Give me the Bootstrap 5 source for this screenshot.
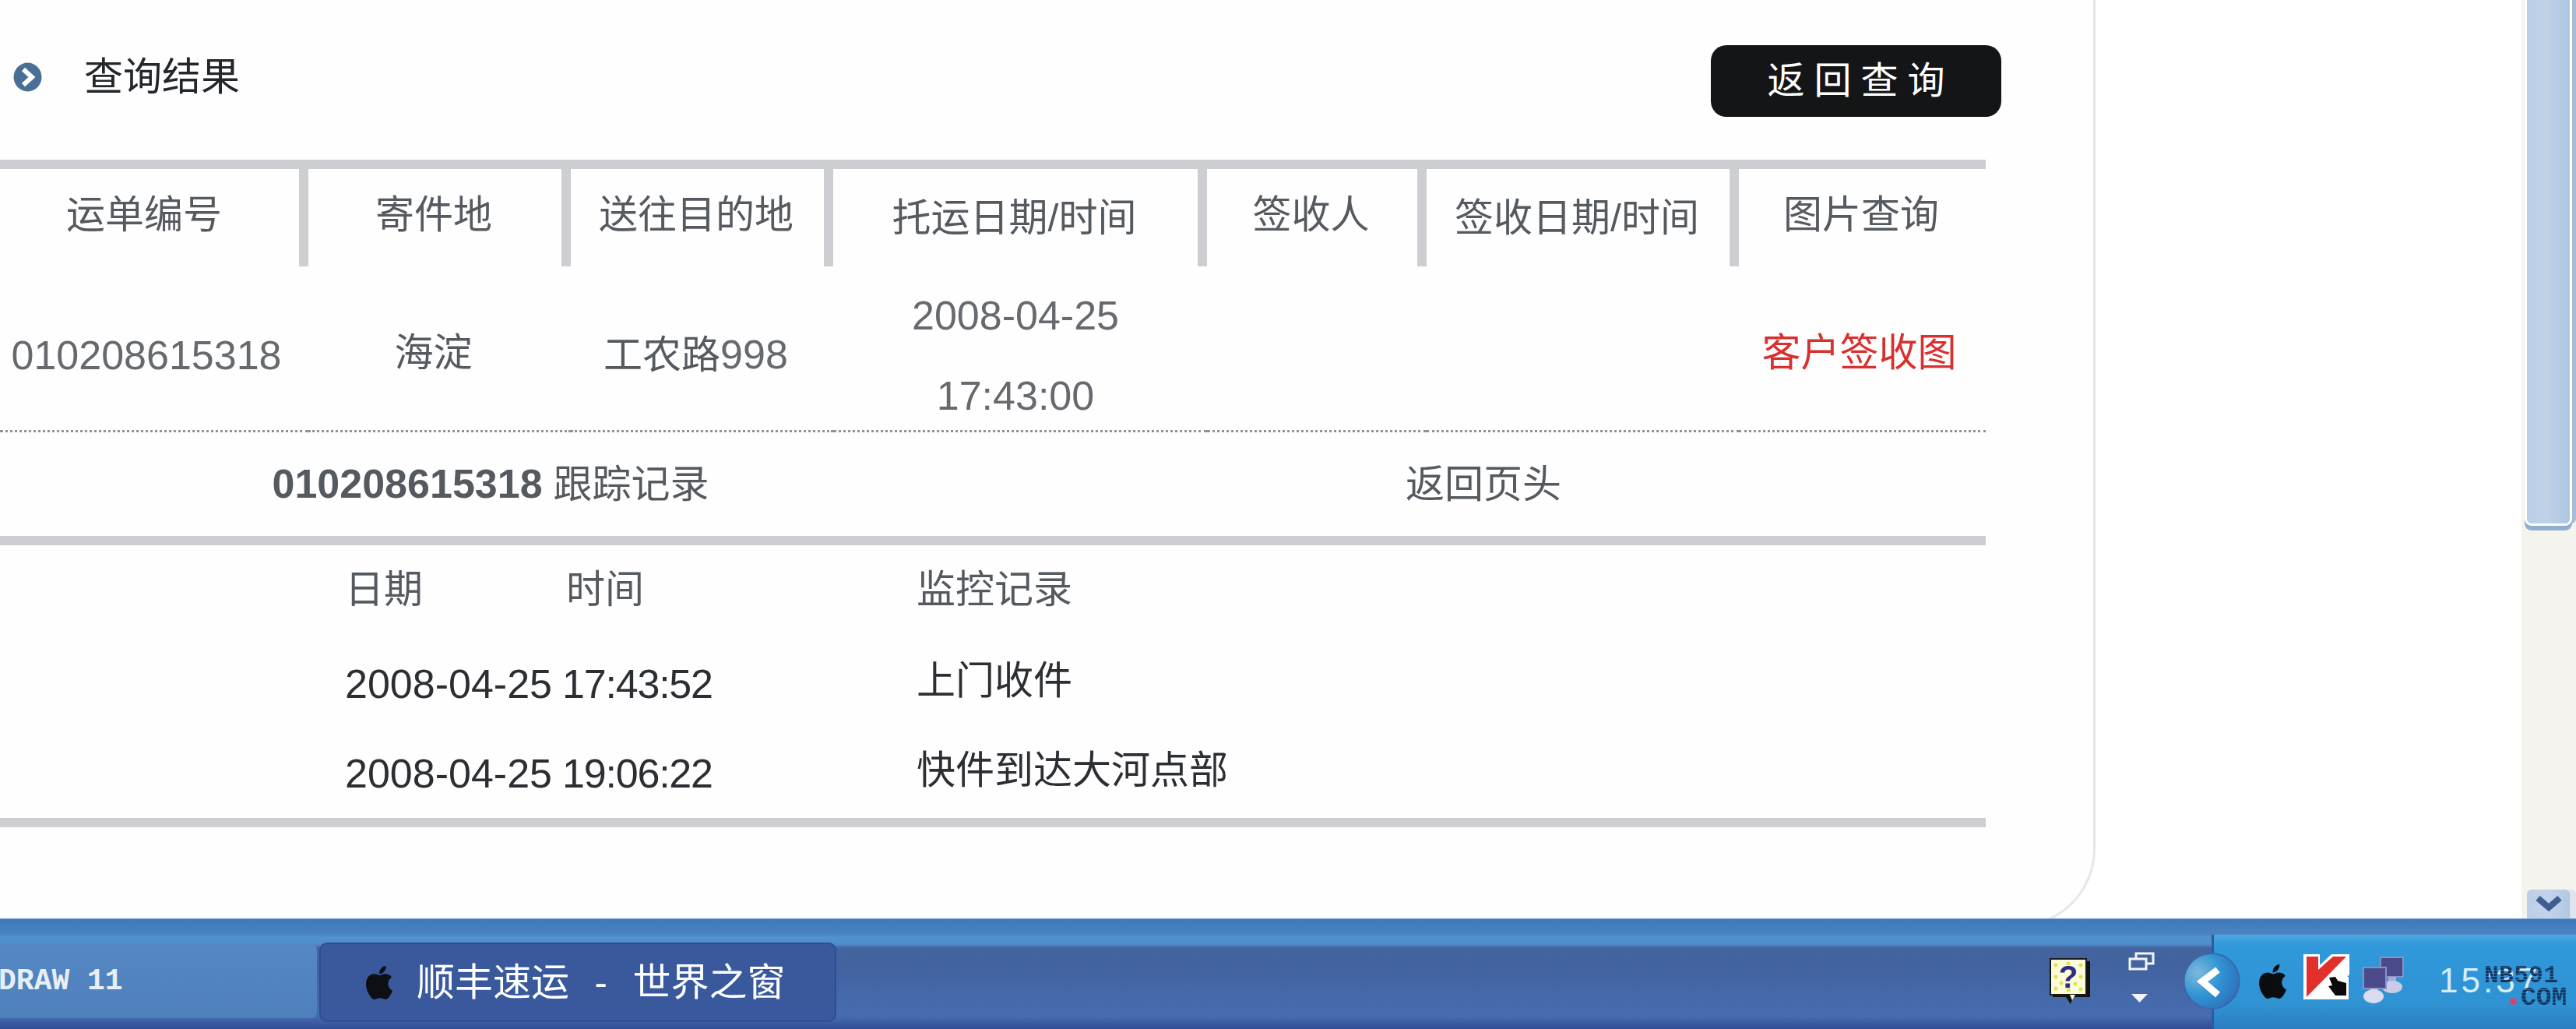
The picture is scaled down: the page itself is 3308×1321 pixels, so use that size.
<!DOCTYPE html>
<html lang="zh-CN">
<head>
  <meta charset="UTF-8" />
  <title>顺丰速运 - 世界之窗</title>
  <link rel="stylesheet" href="https://cdn.jsdelivr.net/npm/bootstrap@5.3.0/dist/css/bootstrap.min.css">
  <style>
    html, body { height: 1321px; overflow: hidden; }
    body {
      background: #fff;
      font-family: "Liberation Sans", "Noto Sans CJK SC", sans-serif;
      font-size: 50px;
      color: #555a60;
      line-height: 1.2;
    }
    .desk { height: 1179px; overflow: hidden; }

    /* page panel */
    .panel {
      width: 2691px;
      height: 1190px;
      padding-right: 138px;
      background: #fefefe;
      border-right: 3px solid #e4e8e8;
      border-bottom: 3px solid #e4e8e8;
      border-bottom-right-radius: 100px;
      flex: none;
    }
    .panel-head { height: 205px; padding: 58px 0 0 17px; margin-right: -20px; }
    .panel-title { margin-top: 5px; line-height: 72px; color: #23262a; }
    .bullet { width: 37px; height: 38px; margin-right: 54px; }
    .back-btn {
      width: 373px;
      height: 92px;
      padding: 0 0 0 12px;
      background: #141517;
      border: 0;
      border-radius: 20px;
      color: #fff;
      font-size: 48px;
      letter-spacing: 12px;
      line-height: 92px;
    }
    .back-btn:hover { background: #141517; color: #fff; }
    .rule { height: 12px; background: #cdced2; }

    .ship-grid { table-layout: fixed; border-collapse: separate; border-spacing: 0; width: 2550px; }
    .ship-grid th {
      height: 125px;
      padding: 0 3px 8px 0;
      border-right: 12px solid #cdced2;
      font-weight: 400;
      text-align: center;
      vertical-align: middle;
    }
    .ship-grid th:first-child { padding-right: 14px; }
    .ship-grid th:last-child { border-right: 0; }
    .ship-grid th.low { padding-bottom: 0; }
    .ship-grid td {
      height: 213px;
      padding: 18px 12px 0 0;
      border-bottom: 3px dotted #8f9397;
      text-align: center;
      vertical-align: middle;
    }
    .ship-grid td:first-child { padding-right: 20px; }
    .ship-grid td.nudge { padding-top: 12px; }
    .ship-grid td.shift-left { padding-right: 16px; }
    .ship-grid td.shift-right { padding-right: 8px; }
    .num { font-size: 52px; line-height: 52px; color: #666a6f; }
    .num + .num { margin-top: 51px; }
    .sign-link { color: #d8302e; text-decoration: none; }
    .track-row { height: 133px; }
    .track-left { width: 1260px; }
    .track-right { width: 1290px; }
    .track-no { font-size: 52px; font-weight: 700; }
    .top-link { color: #555a60; text-decoration: none; }

    .log-grid { table-layout: fixed; border-collapse: separate; border-spacing: 0; width: 2550px; }
    .log-grid td { padding: 0; height: 116px; vertical-align: middle; color: #2b2e32; white-space: nowrap; }
    .log-grid td.log-cn { padding-bottom: 8px; }
    .log-grid tr.log-head td { height: 120px; padding-bottom: 6px; color: #555a60; }
    .log-grid tr:last-child td { height: 114px; }
    .log-num { font-size: 52px; }
    .log-time { display: inline-block; margin-left: -5px; letter-spacing: -1.2px; }

    /* scrollbar */
    .vbar { width: 70px; flex: none; margin-left: auto; padding-left: 7px; background: #f5f3ee; }
    .vbar-thumb {
      width: 55px;
      height: 672px;
      background: linear-gradient(90deg, #bccfe6, #c0d0e7 50%, #adc6e2);
      border-bottom-left-radius: 6px;
      border-bottom-right-radius: 6px;
      box-shadow: 0 0 0 3px #fff, 0 6px 0 3px #8fafd0, 8px 0 0 0 #a7bcd6;
    }
    .vbar-down {
      width: 55px;
      height: 37px;
      background: linear-gradient(90deg, #bccfe6, #c3d2e9 50%, #b0c8e3);
      border-top-left-radius: 6px;
      border-top-right-radius: 6px;
      box-shadow: 8px 0 0 0 #dfe5ee;
    }
    .vbar-down svg { display: block; margin: 8px auto 0; }

    /* taskbar */
    .taskbar {
      height: 142px;
      background: linear-gradient(180deg, #a9c6de 0, #3f78bc 1px, #4a84c2 20px, #5192cf 24px, #4f8ecb 33px, #44649f 38px, #42629f 60px, #466db0 125px, #3f62a8 131px, #2f4b94 142px);
      position: relative;
    }
    .task-btn {
      flex: none;
      white-space: nowrap;
      overflow: hidden;
      color: #fff;
      display: flex;
      align-items: center;
    }
    .task-prev {
      width: 407px;
      height: 95px;
      margin-top: 33px;
      background: linear-gradient(180deg, #5487c3, #4f80bc);
      border-radius: 0 8px 8px 0;
      font-family: "Liberation Mono", monospace;
      font-size: 38px;
      font-weight: 700;
      color: #e8eef6;
    }
    .task-prev span { margin-left: -116px; }
    .task-now {
      width: 664px;
      height: 102px;
      margin: 31px 0 0 3px;
      padding-left: 56px;
      background: #39599c;
      border: 2px solid #2f4d90;
      border-radius: 10px;
      font-size: 49px;
      word-spacing: 19px;
    }
    .apple-task { width: 37px; height: 43px; margin-right: 30px; }
    .help-ico { width: 53px; height: 60px; margin: 51px 0 0 1558px; flex: none; }
    .restore-ico { width: 34px; height: 65px; margin: 43px 0 0 48px; flex: none; }
    .tray {
      width: 468px;
      height: 121px;
      margin: 21px 0 0 73px;
      flex: none;
      position: relative;
      background: linear-gradient(180deg, #4ea8e0 0, #2f99da 14px, #2f92d3 90px, #2a7ec2 121px);
      border-left: 3px solid #2f5a9f;
    }
    .tray-toggle { width: 74px; height: 75px; margin: 22px 0 0 -40px; flex: none; }
    .apple-tray { width: 38px; height: 44px; margin: 38px 0 0 22px; flex: none; }
    .kav-ico { width: 59px; height: 58px; margin: 25px 0 0 21px; flex: none; }
    .net-ico { width: 56px; height: 62px; margin: 27px 0 0 16px; flex: none; }
    .clock { margin: 34px 0 0 43px; font-size: 44px; line-height: 50px; letter-spacing: 4px; color: #d6ecf8; }
    .stamp {
      position: absolute;
      font-family: "Liberation Mono", monospace;
      font-weight: 700;
      white-space: nowrap;
      color: transparent;
      background: repeating-linear-gradient(180deg, #12345c 0 3px, #2a6fa8 3px 4px);
      -webkit-background-clip: text;
      background-clip: text;
    }
    .stamp-a { left: 347px; top: 38px; font-size: 31px; line-height: 30px; letter-spacing: .5px; }
    .stamp-b { left: 394px; top: 67px; font-size: 33px; line-height: 30px; }
    .stamp-dot { position: absolute; left: 380px; top: 81px; width: 9px; height: 9px; border-radius: 50%; background: #c8487a; }
  </style>
</head>
<body>
  <svg width="0" height="0" class="position-absolute">
    <symbol id="apple" viewBox="3.5 3 16.5 18" preserveAspectRatio="none">
      <path d="M17.05 20.28c-.98.95-2.05.8-3.08.35-1.09-.46-2.09-.48-3.24 0-1.44.62-2.2.44-3.06-.35C2.79 15.25 3.51 7.59 9.05 7.31c1.35.07 2.29.74 3.08.8 1.18-.24 2.31-.93 3.57-.84 1.51.12 2.65.72 3.4 1.8-3.12 1.87-2.38 5.98.48 7.13-.57 1.5-1.31 2.99-2.54 4.09zM12.03 7.25c-.15-2.23 1.66-4.07 3.74-4.25.29 2.58-2.34 4.5-3.74 4.25z"/>
    </symbol>
  </svg>

  <div class="desk d-flex">
    <div class="panel">
      <div class="panel-head d-flex justify-content-between align-items-start">
        <div class="panel-title d-flex align-items-center">
          <svg class="bullet" viewBox="0 0 37 38">
            <ellipse cx="18.5" cy="19" rx="18" ry="18.5" fill="#4a6f96"/>
            <path d="M13 9l11 10-11 10" fill="none" stroke="#fff" stroke-width="6"/>
          </svg>
          查询结果
        </div>
        <button type="button" class="btn back-btn">返回查询</button>
      </div>
      <div class="rule"></div>
      <table class="ship-grid">
        <colgroup>
          <col style="width:396px"><col style="width:337px"><col style="width:337px"><col style="width:480px"><col style="width:282px"><col style="width:401px"><col style="width:317px">
        </colgroup>
        <tr>
          <th>运单编号</th>
          <th>寄件地</th>
          <th>送往目的地</th>
          <th class="low">托运日期/时间</th>
          <th>签收人</th>
          <th class="low">签收日期/时间</th>
          <th>图片查询</th>
        </tr>
        <tr>
          <td><div class="num">010208615318</div></td>
          <td class="nudge shift-left">海淀</td>
          <td class="shift-left">工农路<span class="num">998</span></td>
          <td><div class="num">2008-04-25</div><div class="num">17:43:00</div></td>
          <td></td>
          <td></td>
          <td class="nudge shift-right"><a class="sign-link" href="#">客户签收图</a></td>
        </tr>
      </table>
      <div class="track-row d-flex align-items-center text-center">
        <div class="track-left"><span class="track-no">010208615318</span> 跟踪记录</div>
        <div class="track-right"><a class="top-link" href="#">返回页头</a></div>
      </div>
      <div class="rule"></div>
      <table class="log-grid">
        <colgroup>
          <col style="width:443px"><col style="width:284px"><col style="width:450px"><col>
        </colgroup>
        <tr class="log-head"><td></td><td>日期</td><td>时间</td><td>监控记录</td></tr>
        <tr><td></td><td class="log-num">2008-04-25</td><td class="log-num"><span class="log-time">17:43:52</span></td><td class="log-cn">上门收件</td></tr>
        <tr><td></td><td class="log-num">2008-04-25</td><td class="log-num"><span class="log-time">19:06:22</span></td><td class="log-cn">快件到达大河点部</td></tr>
      </table>
      <div class="rule"></div>
    </div>
    <div class="vbar d-flex flex-column justify-content-between">
      <div class="vbar-thumb"></div>
      <div class="vbar-down">
        <svg width="40" height="24" viewBox="0 0 40 24"><path d="M6 3l14 12L34 3" fill="none" stroke="#3f5f92" stroke-width="8"/></svg>
      </div>
    </div>
  </div>

  <div class="taskbar d-flex align-items-start">
    <div class="task-btn task-prev"><span>CORELDRAW 11</span></div>
    <div class="task-btn task-now">
      <svg class="apple-task" fill="#0d0f14"><use href="#apple"/></svg>
      <span>顺丰速运 - 世界之窗</span>
    </div>
    <svg class="help-ico" viewBox="0 0 53 60">
      <path d="M4 4h48v46H30l-3 9-6-9H4z" fill="#14110a"/>
      <rect x="1" y="1" width="46" height="46" fill="#fbfbd8" stroke="#1a1a1a" stroke-width="2"/>
      <g fill="#dfe05a">
        <circle cx="8" cy="9" r="2.5"/><circle cx="24" cy="7" r="2.5"/><circle cx="40" cy="9" r="2.5"/>
        <circle cx="8" cy="24" r="2.5"/><circle cx="40" cy="24" r="2.5"/><circle cx="16" cy="16" r="2.5"/>
        <circle cx="33" cy="33" r="2.5"/><circle cx="8" cy="39" r="2.5"/><circle cx="24" cy="41" r="2.5"/><circle cx="40" cy="40" r="2.5"/><circle cx="15" cy="32" r="2.5"/>
      </g>
      <text x="24" y="38" text-anchor="middle" font-family="Liberation Sans" font-weight="700" font-size="40" fill="#2e2a86">?</text>
      <path d="M26 47h7l-4 7z" fill="#fbfbd8"/>
    </svg>
    <svg class="restore-ico" viewBox="0 0 34 65">
      <path d="M10 2h22v13H10z" fill="none" stroke="#f2f5fb" stroke-width="3"/>
      <path d="M2 9h21v13H2z" fill="#44649f" stroke="#f2f5fb" stroke-width="3"/>
      <path d="M4 54h21L14.500 65z" fill="#f2f5fb"/>
    </svg>
    <div class="tray d-flex align-items-start">
      <svg class="tray-toggle" viewBox="0 0 74 75">
        <defs>
          <radialGradient id="orb" cx="25%" cy="35%" r="85%">
            <stop offset="0" stop-color="#7db9dc"/>
            <stop offset=".5" stop-color="#2f93d4"/>
            <stop offset="1" stop-color="#2f6cb6"/>
          </radialGradient>
        </defs>
        <circle cx="37" cy="37.500" r="35.500" fill="url(#orb)" stroke="#3d66a8" stroke-width="2"/>
        <path d="M45 23L25 38l20 17" fill="none" stroke="#fff" stroke-width="9"/>
      </svg>
      <svg class="apple-tray" fill="#0b0c10"><use href="#apple"/></svg>
      <svg class="kav-ico" viewBox="0 0 59 58">
        <path d="M0 0h21v14L36 0h23v26L30 58H0z" fill="#fff"/>
        <path d="M4 3h15v17L38 3h17L4 55z" fill="#e22f2c"/>
        <path d="M29 29h29v29H29z" fill="#fff"/>
        <path d="M33 30l8-1 3 5 11 3v16H41l-9-12 5-1z" fill="#0a0a0c"/>
      </svg>
      <svg class="net-ico" viewBox="0 0 56 62">
        <rect x="24" y="2" width="29" height="25" fill="#4b4a8a" stroke="#8b90c4" stroke-width="2"/>
        <path d="M34 27h10v12H34z" fill="#a9abd6"/>
        <ellipse cx="39" cy="40" rx="13" ry="8" fill="#c9cbe8"/>
        <rect x="2" y="15" width="29" height="27" fill="#4b4a8a" stroke="#8b90c4" stroke-width="2"/>
        <path d="M11 42h10v10H11z" fill="#a9abd6"/>
        <ellipse cx="15" cy="52" rx="13" ry="9" fill="#dcdcf0"/>
      </svg>
      <div class="clock">15:37</div>
      <div class="stamp stamp-a">NB591</div>
      <div class="stamp-dot"></div>
      <div class="stamp stamp-b">COM</div>
    </div>
  </div>
  <script src="https://cdn.jsdelivr.net/npm/bootstrap@5.3.0/dist/js/bootstrap.bundle.min.js"></script>
</body>
</html>
